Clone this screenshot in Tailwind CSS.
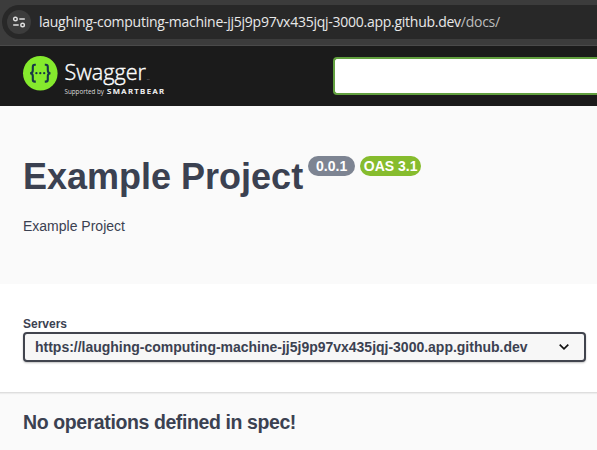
<!DOCTYPE html>
<html lang="en">
<head>
<meta charset="utf-8">
<title>Example Project</title>
<script src="https://cdn.jsdelivr.net/npm/@tailwindcss/browser@4"></script>
</head>
<body class="w-[597px] h-[450px] overflow-hidden bg-[#fafafa] font-['Liberation_Sans',sans-serif] text-[#3b4151]">
  <div class="h-[46px] bg-[#3c3c3c] border-b border-[#4a4a4a] pt-[5px] pl-[2px]">
    <div class="h-[34px] bg-[#282828] rounded-l-full flex items-center pl-[5px]">
      <div class="size-6 rounded-full bg-[#3c3c3c] shrink-0 flex items-center justify-center">
        <svg width="14" height="14" viewBox="0 0 14 14" fill="none" stroke="#e0e0e0" stroke-width="1.4"><circle cx="3.4" cy="4" r="1.8"/><path d="M7.3 4H12.8M1.2 10H6.7"/><circle cx="10.6" cy="10" r="1.8"/></svg>
      </div>
      <div class="ml-2 whitespace-nowrap font-['Open_Sans',sans-serif] text-[14px] leading-5 tracking-[-0.26px] text-[#e8e8e8]">laughing-computing-machine-jj5j9p97vx435jqj-3000.app.github.dev<span class="text-[#bdbdbd]">/docs/</span></div>
    </div>
  </div>
  <header class="h-[60px] bg-[#1b1b1b] flex">
    <svg width="170" height="60" viewBox="0 0 170 60" class="shrink-0">
      <circle cx="40.3" cy="27.3" r="17.3" fill="#85ea2d"/>
      <g fill="none" stroke="#173647" stroke-width="2.1">
        <path d="M35.8 18.8H34.8Q32.8 18.8 32.8 21V24.3Q32.8 27.2 30.1 27.2Q32.8 27.2 32.8 30.1V33.4Q32.8 35.6 34.8 35.6H35.8"/>
        <path d="M44.8 18.8H45.8Q47.8 18.8 47.8 21V24.3Q47.8 27.2 50.5 27.2Q47.8 27.2 47.8 30.1V33.4Q47.8 35.6 45.8 35.6H44.8"/>
      </g>
      <g fill="#173647"><circle cx="36.4" cy="27.2" r="1.15"/><circle cx="40.3" cy="27.2" r="1.15"/><circle cx="44.2" cy="27.2" r="1.15"/></g>
      <text x="64.5" y="34.3" font-family="Open Sans, sans-serif" font-size="22.5" font-weight="300" textLength="85" lengthAdjust="spacingAndGlyphs" fill="#fff" stroke="#fff" stroke-width=".4">Swagger<tspan dx="1" font-size="2" stroke="none">TM</tspan></text>
      <text x="64.5" y="48.3" font-family="Open Sans, sans-serif" font-size="6.4" textLength="39.5" lengthAdjust="spacingAndGlyphs" fill="#ddd">Supported by</text>
      <text x="107" y="48.3" font-family="Open Sans, sans-serif" font-weight="600" font-size="7.8" textLength="57" lengthAdjust="spacing" fill="#fff" stroke="#fff" stroke-width=".15">SMARTBEAR</text>
    </svg>
    <div class="ml-[163px] mt-[11px] h-[38px] flex-1 bg-white border-2 border-r-0 border-[#62a03f] rounded-l-[4px]"></div>
  </header>
  <section class="h-[178px] pl-[23px] pt-[49px]">
    <div class="flex items-start">
      <h1 class="pt-px text-[36px] leading-[42px] font-bold whitespace-nowrap">Example Project</h1>
      <span class="ml-[5px] mt-px h-5 w-[47px] rounded-full bg-[#7d8492] text-white text-[14px] leading-5 font-bold text-center">0.0.1</span>
      <span class="ml-[5px] mt-px h-5 w-[61px] rounded-full bg-[#86bc2d] text-white text-[14px] leading-5 font-bold text-center whitespace-nowrap">OAS 3.1</span>
    </div>
    <p class="mt-5 text-[14px] leading-4">Example Project</p>
  </section>
  <section class="h-[108px] bg-white pl-[23px] pt-[33px] shadow-[0_1px_0_0_#dedede,0_2px_1px_0_rgba(0,0,0,0.05)]">
    <div class="text-[12px] leading-[14px] font-bold">Servers</div>
    <div class="mt-px w-[563px] h-[30px] rounded-[4px] border-2 border-[#41444e] bg-[#f7f7f7] shadow-[0_1px_2px_0_rgba(0,0,0,0.25)] flex items-center justify-between pl-[10px] pr-[15px]">
      <span class="text-[14px] leading-4 font-bold whitespace-nowrap tracking-[-0.01px]">https://laughing-computing-machine-jj5j9p97vx435jqj-3000.app.github.dev</span>
      <svg width="10" height="6" viewBox="0 0 10 6" fill="none" stroke="#111" stroke-width="1.7"><path d="M.7.7L5 4.8L9.3.7"/></svg>
    </div>
  </section>
  <h3 class="pl-[23px] pt-[19px] text-[19.5px] leading-[23px] font-bold whitespace-nowrap tracking-[-0.4px]">No operations defined in spec!</h3>
</body>
</html>
